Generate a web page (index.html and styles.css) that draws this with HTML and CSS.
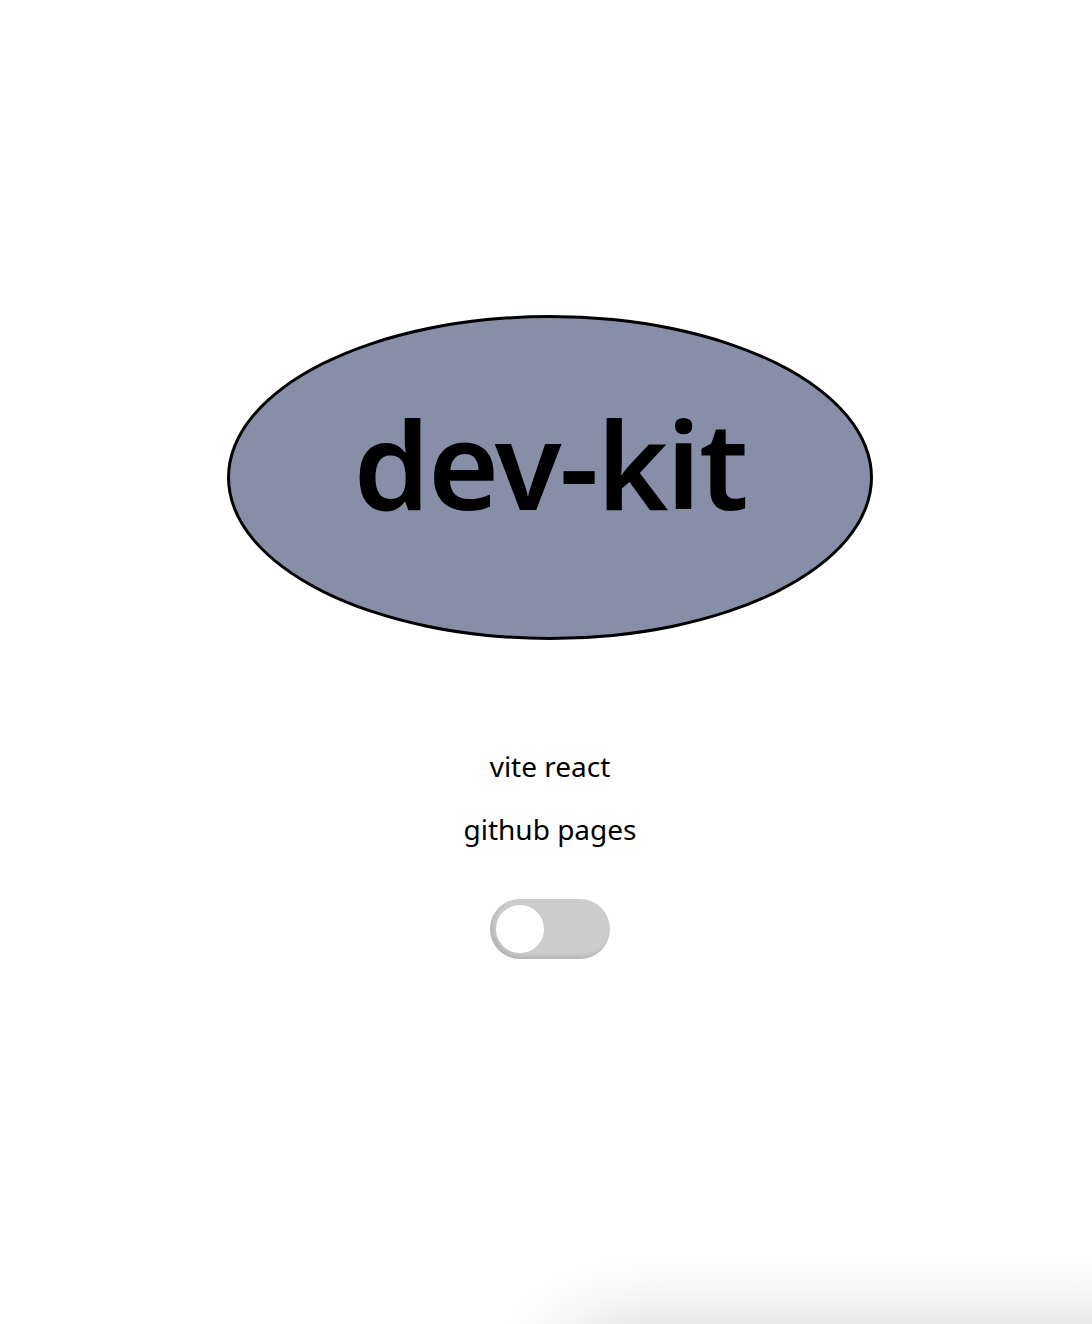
FILE: index.html
```html
<!DOCTYPE html>
<html>
<head>
  <title>dev-kit</title>
  <link rel="stylesheet" href="styles.css">
</head>
<body>
  <div class="app">
    <!-- Logo -->
    <div class="logo">
      <h1>dev-kit</h1>
    </div>

    <p class="line">vite react</p>
    <p class="line">github pages</p>

    <!-- Theme toggle -->
    <label class="switch">
      <input type="checkbox">
      <span class="knob"></span>
    </label>
  </div>
  <div class="toast-shadow"></div>
</body>
</html>
```

FILE: styles.css
```css
html, body { margin: 0; padding: 0; background: #fff; }
body { font-family: "Noto Sans", "Noto Sans CJK KR", sans-serif; color: #000; overflow: hidden; }
.app { display: flex; flex-direction: column; align-items: center; padding: 315px 0 0 8px; }
.logo {
  box-sizing: border-box; width: 646px; height: 325px; border: 3px solid #000; border-radius: 50%;
  background: #878fa8; display: flex; align-items: center; justify-content: center;
  padding-bottom: 30px;
}
.logo h1 { margin: 0; font-size: 122px; font-weight: 600; line-height: 1; letter-spacing: -2px; }
.line { margin: 0; font-size: 28px; line-height: 63px; }
.app .line:first-of-type { margin-top: 95px; }
.switch {
  position: relative; display: block; width: 120px; height: 60px; margin-top: 38px;
  background: #ccc; border-radius: 30px; box-shadow: inset 3px -3px 4px rgba(0,0,0,0.12);
}
.switch input { display: none; }
.knob {
  position: absolute; left: 6px; top: 6px; width: 48px; height: 48px;
  background: #fff; border-radius: 50%;
}
.toast-shadow {
  position: fixed; left: 560px; top: 1335px; width: 620px; height: 100px;
  background: #fff; border-radius: 50px; box-shadow: 0 0 90px rgba(0,0,0,0.22);
}
```
